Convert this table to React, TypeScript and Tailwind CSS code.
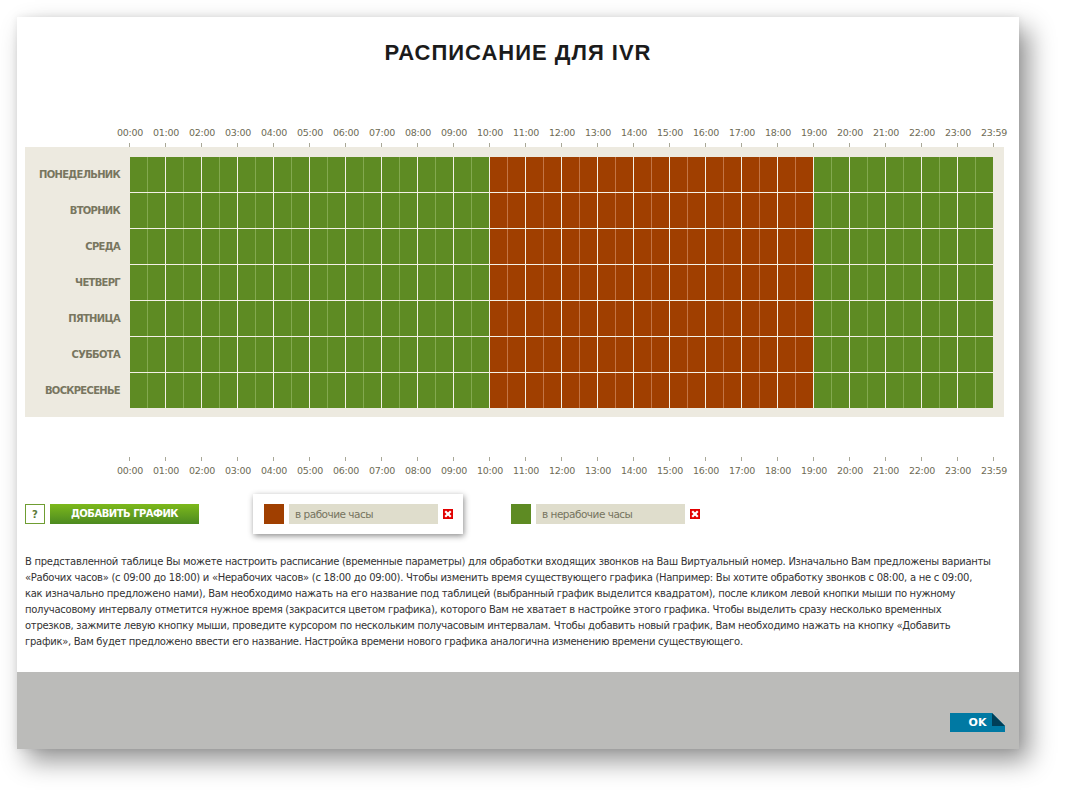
import React from "react";

const days = [
  "ПОНЕДЕЛЬНИК",
  "ВТОРНИК",
  "СРЕДА",
  "ЧЕТВЕРГ",
  "ПЯТНИЦА",
  "СУББОТА",
  "ВОСКРЕСЕНЬЕ",
];

const times = [
  "00:00", "01:00", "02:00", "03:00", "04:00", "05:00", "06:00", "07:00",
  "08:00", "09:00", "10:00", "11:00", "12:00", "13:00", "14:00", "15:00",
  "16:00", "17:00", "18:00", "19:00", "20:00", "21:00", "22:00", "23:00", "23:59",
];

const paragraph = [
  "В представленной таблице Вы можете настроить расписание (временные параметры) для обработки входящих звонков на Ваш Виртуальный номер. Изначально Вам предложены варианты",
  "«Рабочих часов» (с 09:00 до 18:00) и «Нерабочих часов» (с 18:00 до 09:00). Чтобы изменить время существующего графика (Например: Вы хотите обработку звонков с 08:00, а не с 09:00,",
  "как изначально предложено нами), Вам необходимо нажать на его название под таблицей (выбранный график выделится квадратом), после кликом левой кнопки мыши по нужному",
  "получасовому интервалу отметится нужное время (закрасится цветом графика), которого Вам не хватает в настройке этого графика. Чтобы выделить сразу несколько временных",
  "отрезков, зажмите левую кнопку мыши, проведите курсором по нескольким получасовым интервалам. Чтобы добавить новый график, Вам необходимо нажать на кнопку «Добавить",
  "график», Вам будет предложено ввести его название. Настройка времени нового графика аналогична изменению времени существующего.",
];

function TimeRow({ bottom }: { bottom?: boolean }) {
  return (
    <div className="flex ml-[95px]">
      {times.map((t) => (
        <div key={t} className="w-[36px] flex flex-col">
          {bottom && <div className="ml-[17px] w-px h-[4px] bg-[#a9a898]" />}
          <div
            className={
              "h-[10px] leading-[10px] text-center text-[9.5px] text-[#6e6b55] font-['DejaVu_Sans',sans-serif] tracking-[-0.3px] " +
              (bottom ? "mt-[5px]" : "mb-[5px]")
            }
          >
            {t}
          </div>
          {!bottom && <div className="ml-[17px] w-px h-[4px] bg-[#a9a898]" />}
        </div>
      ))}
    </div>
  );
}

function Cell({ c }: { c: number }) {
  const work = c >= 20 && c < 38;
  const last = c === 47;
  const hourEnd = c % 2 === 1;
  let cls = "h-[35px] ";
  if (last) {
    cls += "w-[17px] ";
  } else {
    cls += "w-[18px] border-r ";
    if (hourEnd) cls += "border-[#f4f1e6] ";
    else cls += work ? "border-[#c37545] " : "border-[#83a94f] ";
  }
  cls += work ? "bg-[#a03f00]" : "bg-[#5e8b23]";
  return <div className={cls} />;
}

function CloseIcon() {
  return (
    <svg width="10" height="10" viewBox="0 0 10 10" className="block">
      <rect x="0" y="0" width="10" height="10" fill="#e10000" />
      <path d="M3 3 L7 7 M7 3 L3 7" stroke="#fff" strokeWidth="2.2" strokeLinecap="square" />
    </svg>
  );
}

function Legend({
  color,
  label,
  selected,
}: {
  color: string;
  label: string;
  selected?: boolean;
}) {
  return (
    <div
      className={
        "w-[210px] h-[40px] flex items-center pl-[11px] " +
        (selected ? "bg-white shadow-[1px_2px_6px_rgba(0,0,0,0.45)]" : "")
      }
    >
      <div className={"w-[20px] h-[20px] " + color} />
      <div className="ml-[5px] w-[149px] h-[20px] bg-[#dfddcc] pl-[6px] text-[10.5px] leading-[20px] text-[#76745f] font-['DejaVu_Sans',sans-serif] tracking-[-0.5px]">
        {label}
      </div>
      <div className="ml-[5px]">
        <CloseIcon />
      </div>
    </div>
  );
}

export default function App() {
  return (
    <div className="w-[1067px] h-[797px] bg-white p-[17px] font-['Liberation_Sans',Arial,sans-serif]">
      <div className="w-[1002px] h-[732px] bg-white flex flex-col shadow-[10px_12px_24px_rgba(0,0,0,0.42),0_0_8px_rgba(0,0,0,0.08)]">
        <div className="flex-1 flex flex-col">
          <h1 className="mt-[23px] text-center text-[22px] leading-[26px] font-bold tracking-[1px] text-[#1b1b1b]">
            РАСПИСАНИЕ ДЛЯ IVR
          </h1>

          <div className="mt-[62px]">
            <TimeRow />
          </div>

          <div className="ml-[8px] w-[979px] bg-[#edeae0] pt-[10px] pb-[9px] flex">
            <div className="w-[105px] flex flex-col gap-px">
              {days.map((d) => (
                <div
                  key={d}
                  className="h-[35px] flex items-center justify-end pr-[10px] text-[10px] font-bold text-[#78765f] font-['DejaVu_Sans',sans-serif] tracking-[-0.7px]"
                >
                  {d}
                </div>
              ))}
            </div>
            <div className="w-[863px] flex flex-col gap-px bg-[#f4f1e6]">
              {days.map((d) => (
                <div key={d} className="flex">
                  {Array.from({ length: 48 }, (_, c) => (
                    <Cell key={c} c={c} />
                  ))}
                </div>
              ))}
            </div>
          </div>

          <div className="mt-[40px]">
            <TimeRow bottom />
          </div>

          <div className="mt-[18px] ml-[8px] flex items-center">
            <div className="w-[20px] h-[20px] border border-[#6f9d32] flex items-center justify-center text-[10px] font-bold text-[#5c7a3a] font-['DejaVu_Sans',sans-serif]">
              ?
            </div>
            <button className="ml-[5px] w-[149px] h-[20px] bg-gradient-to-b from-[#7db91a] to-[#4c8a20] text-white text-[10px] font-bold font-['DejaVu_Sans',sans-serif] tracking-[-0.5px] leading-[20px]">
              ДОБАВИТЬ ГРАФИК
            </button>
            <div className="ml-[54px]">
              <Legend color="bg-[#a03f00]" label="в рабочие часы" selected />
            </div>
            <div className="ml-[37px]">
              <Legend color="bg-[#5e8b23]" label="в нерабочие часы" />
            </div>
          </div>

          <div className="mt-[20px] ml-[8px] text-[10px] leading-[16px] text-[#333333] font-['DejaVu_Sans',sans-serif] tracking-[-0.28px]">
            {paragraph.map((l, i) => (
              <div key={i} className="whitespace-nowrap">
                {l}
              </div>
            ))}
          </div>
        </div>

        <div className="h-[77px] bg-[#bbbbb9] flex justify-end items-end pr-[14px] pb-[17px]">
          <button className="relative w-[55px] h-[19px] bg-[#0079a3] text-white text-[11px] font-bold leading-[19px] font-['DejaVu_Sans',sans-serif]">
            OK
            <svg width="13" height="13" viewBox="0 0 13 13" className="absolute right-0 top-0 block">
              <polygon points="0,0 13,0 13,13" fill="#bbbbb9" />
              <polygon points="0,0 13,13 0,13" fill="#003f58" />
            </svg>
          </button>
        </div>
      </div>
    </div>
  );
}
